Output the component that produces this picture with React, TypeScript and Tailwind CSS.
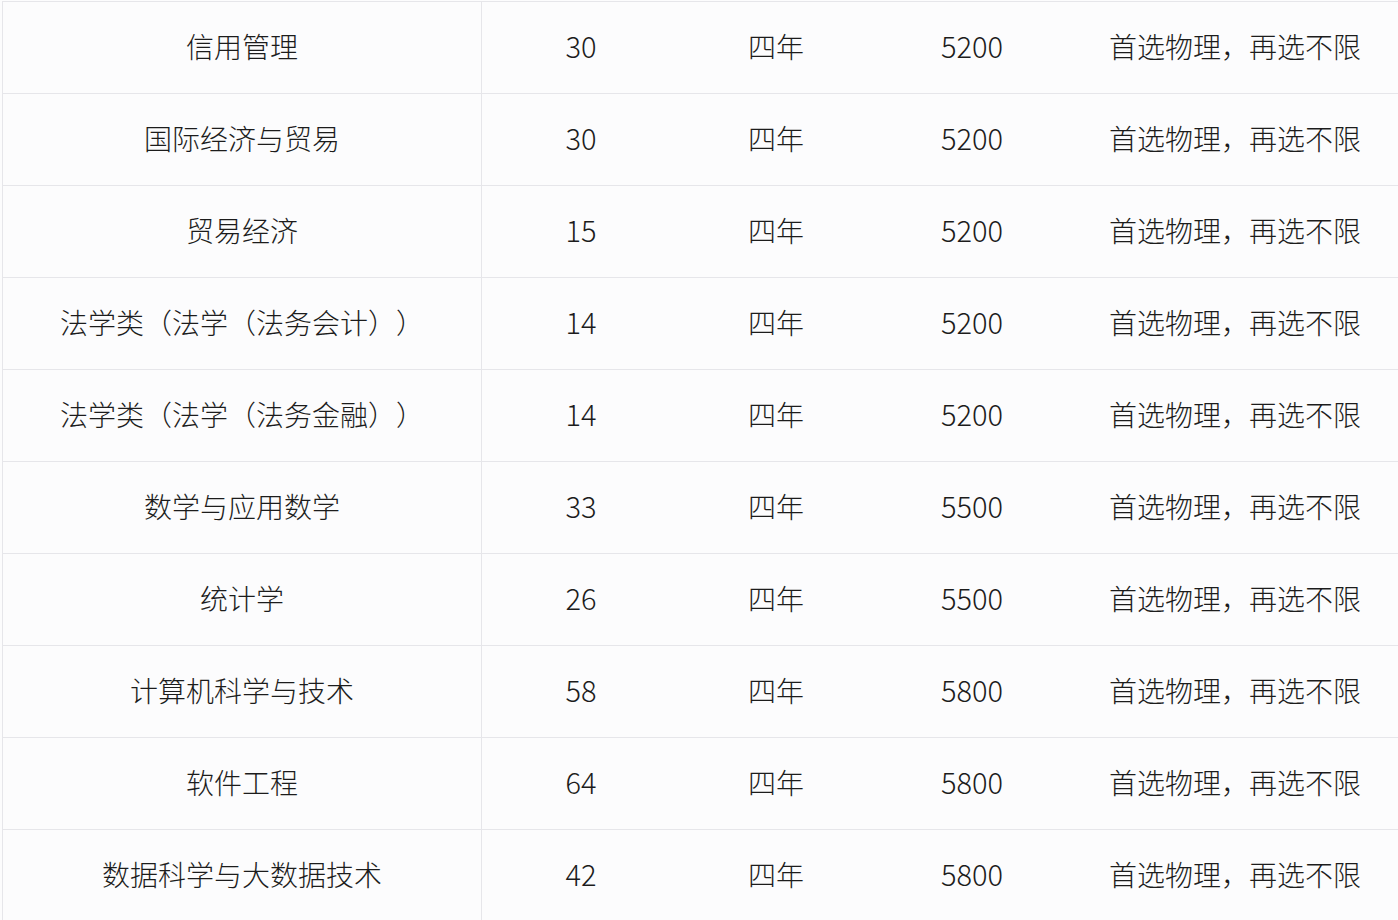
const rows: [string, string, string, string][] = [
  ['信用管理', '30', '四年', '5200'],
  ['国际经济与贸易', '30', '四年', '5200'],
  ['贸易经济', '15', '四年', '5200'],
  ['法学类（法学（法务会计））', '14', '四年', '5200'],
  ['法学类（法学（法务金融））', '14', '四年', '5200'],
  ['数学与应用数学', '33', '四年', '5500'],
  ['统计学', '26', '四年', '5500'],
  ['计算机科学与技术', '58', '四年', '5800'],
  ['软件工程', '64', '四年', '5800'],
  ['数据科学与大数据技术', '42', '四年', '5800'],
];

export default function App() {
  return (
    <div
      className="w-[1398px] h-[920px] overflow-hidden bg-[#fcfcfd] pl-[2px] text-[#1c1c1c] text-[28px] font-light [text-spacing-trim:space-all]"
      style={{ fontFamily: '"Noto Sans CJK SC", "Noto Sans", sans-serif' }}
    >
      <div className="border-l border-t border-[#e6e6ea] mt-[1px]">
        {rows.map((r, i) => (
          <div
            key={i}
            className="grid grid-cols-[479px_198px_192px_200px_326px] h-[92px] border-b border-[#e6e6ea]"
          >
            <div className="flex items-center justify-center pb-[4px] border-r border-[#e6e6ea]">{r[0]}</div>
            <div className="flex items-center justify-center pb-[4px] text-[29px]">{r[1]}</div>
            <div className="flex items-center justify-center pb-[4px]">{r[2]}</div>
            <div className="flex items-center justify-center pb-[4px] text-[29px]">{r[3]}</div>
            <div className="flex items-center justify-center pb-[4px]">首选物理，再选不限</div>
          </div>
        ))}
      </div>
    </div>
  );
}
